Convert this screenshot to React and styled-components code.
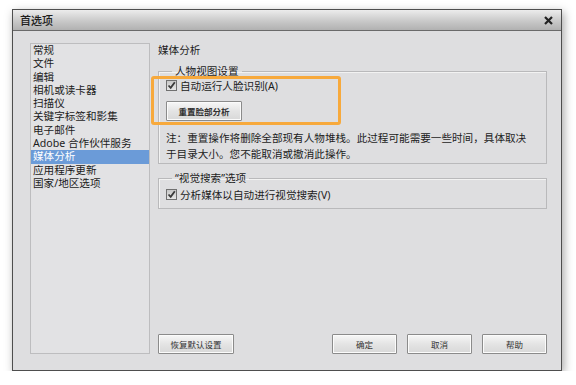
import React from 'react';
import styled, { createGlobalStyle } from 'styled-components';

const GlobalStyle = createGlobalStyle`
  html, body {
    margin: 0;
    padding: 0;
    background: #ffffff;
  }
  body {
    font-family: "Noto Sans", "Noto Sans CJK SC", sans-serif;
    color: #1c1c1c;
  }
`;

const Page = styled.div`
  padding: 9px 0 0 12px;
`;

const Dialog = styled.div`
  width: 548px;
  height: 360px;
  border: 1px solid #4e4e4e;
  background: #dedee0;
  box-shadow: 2px 3px 9px rgba(0, 0, 0, 0.35);
  display: flex;
  flex-direction: column;
`;

const TitleBar = styled.div`
  height: 19px;
  border-bottom: 1px solid #6a6a6a;
  background: linear-gradient(#ececec, #c9c9c9 55%, #b1b1b1);
  display: flex;
  align-items: center;
  justify-content: space-between;
  padding: 1px 6px 0 7px;
`;

const Title = styled.span`
  font-size: 11px;
  line-height: 14px;
  font-weight: 500;
  color: #202020;
`;

const Close = styled.svg`
  width: 9px;
  height: 9px;
  margin-right: 2px;
`;

const Body = styled.div`
  flex: 1;
  display: flex;
  gap: 8px;
  padding: 12px 14px 16px 17px;
`;

const List = styled.ul`
  list-style: none;
  margin: 0;
  padding: 0;
  width: 118px;
  border: 1px solid #bdbdbf;
  background: #e2e2e4;
`;

const Item = styled.li`
  font-size: 10.6px;
  line-height: 13.3px;
  height: 13.3px;
  padding-left: 2px;
  white-space: nowrap;
  color: ${p => (p.$selected ? '#ffffff' : '#1c1c1c')};
  background: ${p => (p.$selected ? '#6b9bd8' : 'transparent')};
`;

const Panel = styled.div`
  flex: 1;
  position: relative;
  display: flex;
  flex-direction: column;
`;

const Heading = styled.div`
  font-size: 10.6px;
  line-height: 14px;
  margin-bottom: 7px;
`;

const Group = styled.fieldset`
  margin: 0 0 7px 0;
  padding: ${p => p.$pad || '0 0 0 7px'};
  border: 1px solid #b9b9bb;
  box-shadow: inset 1px 1px 0 #f2f2f2;
  min-width: 0;
`;

const Legend = styled.legend`
  font-size: 10.6px;
  line-height: 14px;
  padding: 0 3px;
  margin-left: 6px;
`;

const CheckRow = styled.label`
  display: flex;
  align-items: center;
  gap: 3px;
  height: 14px;
  margin-top: ${p => p.$top || '0'};
  font-size: 10.6px;
`;

const Box = styled.span`
  width: 9px;
  height: 9px;
  border: 1px solid #707070;
  background: linear-gradient(#c8c8c8, #e6e6e6);
  display: flex;
  align-items: center;
  justify-content: center;
`;

const Button = styled.button`
  font-family: "Noto Sans CJK SC", sans-serif;
  font-size: 8.5px;
  color: #333;
  height: 20px;
  width: ${p => p.$w || '65px'};
  padding: 0;
  border: 1px solid #8b8b8b;
  border-radius: 1px;
  background: linear-gradient(#f7f7f7, #e4e4e4 50%, #d8d8d8);
  box-shadow: inset 0 0 0 1px #fbfbfb;
`;

const ResetButton = styled(Button)`
  margin: 9px 0 0 0;
  font-weight: 600;
`;

const Note = styled.p`
  margin: 9px 10px 0 0;
  font-size: 10.6px;
  line-height: 16px;
  padding-bottom: 1px;
`;

const Footer = styled.div`
  margin-top: auto;
  display: flex;
  gap: 10px;
`;

const Spacer = styled.div`
  flex: 1;
`;

const Highlight = styled.div`
  position: absolute;
  left: -7px;
  top: 33px;
  width: 184px;
  height: 43px;
  border: 3px solid #f7a93c;
  border-radius: 3px;
  pointer-events: none;
`;

const Check = () => (
  <Box>
    <svg width="9" height="9" viewBox="0 0 9 9">
      <path d="M1.5 4.5 L3.7 6.8 L7.8 1.3" fill="none" stroke="#3a3a3a" strokeWidth="1.8" />
    </svg>
  </Box>
);

const items = [
  '常规',
  '文件',
  '编辑',
  '相机或读卡器',
  '扫描仪',
  '关键字标签和影集',
  '电子邮件',
  'Adobe 合作伙伴服务',
  '媒体分析',
  '应用程序更新',
  '国家/地区选项',
];

export default function App() {
  return (
    <Page>
      <GlobalStyle />
      <Dialog>
        <TitleBar>
          <Title>首选项</Title>
          <Close viewBox="0 0 9 9">
            <path d="M1 1 L8 8 M8 1 L1 8" stroke="#222" strokeWidth="2.2" />
          </Close>
        </TitleBar>
        <Body>
          <List>
            {items.map(it => (
              <Item key={it} $selected={it === '媒体分析'}>{it}</Item>
            ))}
          </List>
          <Panel>
            <Heading>媒体分析</Heading>
            <Group>
              <Legend>人物视图设置</Legend>
              <CheckRow><Check />自动运行人脸识别(A)</CheckRow>
              <ResetButton $w="76px">重置脸部分析</ResetButton>
              <Note>注：重置操作将删除全部现有人物堆栈。此过程可能需要一些时间，具体取决于目录大小。您不能取消或撤消此操作。</Note>
            </Group>
            <Group $pad="0 0 7px 7px">
              <Legend>“视觉搜索”选项</Legend>
              <CheckRow $top="2px"><Check />分析媒体以自动进行视觉搜索(V)</CheckRow>
            </Group>
            <Footer>
              <Button $w="76px">恢复默认设置</Button>
              <Spacer />
              <Button>确定</Button>
              <Button>取消</Button>
              <Button>帮助</Button>
            </Footer>
            <Highlight />
          </Panel>
        </Body>
      </Dialog>
    </Page>
  );
}
